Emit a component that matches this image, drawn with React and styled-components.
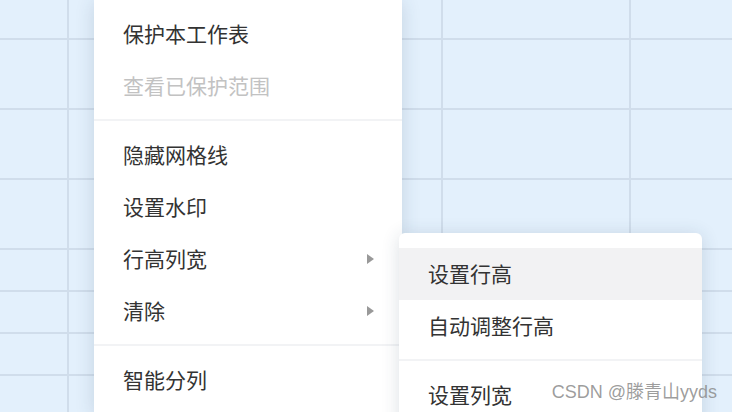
import React from "react"
import styled, { createGlobalStyle } from "styled-components"

const GlobalStyle = createGlobalStyle`
  html, body {
    margin: 0;
    padding: 0;
    width: 732px;
    height: 412px;
    overflow: hidden;
    background: #e3f0fc;
    font-family: "Noto Sans CJK SC", "Noto Sans", sans-serif;
  }
`

const Page = styled.div`
  position: relative;
  width: 732px;
  height: 412px;
  overflow: hidden;
`

const Sheet = styled.div`
  display: grid;
  grid-template-columns: 67px 372px 186px 1fr;
  grid-template-rows: 38px 68px 68px 68px 40px 40px 40px 40px;
  gap: 2px;
  width: 100%;
  height: 100%;
  background: #d0ddeb;
`

const Cell = styled.div`
  background: #e3f0fc;
`

const Menu = styled.div`
  position: absolute;
  left: ${(p) => p.left}px;
  top: ${(p) => p.top}px;
  width: ${(p) => p.width}px;
  padding: ${(p) => p.padTop}px 0 8px;
  background: #fff;
  border-radius: ${(p) => (p.rounded ? "6px" : "0")};
  box-shadow: 0 2px 18px rgba(40, 60, 90, 0.16);
`

const Item = styled.div`
  display: flex;
  align-items: center;
  justify-content: space-between;
  box-sizing: border-box;
  height: 52px;
  padding: 0 28px 3px 29px;
  font-size: 21px;
  color: ${(p) => (p.disabled ? "#c2c2c2" : "#333")};
  background: ${(p) => (p.active ? "#f2f2f3" : "transparent")};
  white-space: nowrap;
`

const Arrow = styled.span`
  width: 0;
  height: 0;
  margin-top: 3px;
  border-top: 5px solid transparent;
  border-bottom: 5px solid transparent;
  border-left: 7px solid #999;
`

const Divider = styled.div`
  height: 2px;
  margin: 7px 0 8px;
  background: #f2f3f5;
`

const Watermark = styled.div`
  position: absolute;
  right: 15px;
  bottom: 9px;
  font-family: "Liberation Sans", "Noto Sans CJK SC", sans-serif;
  font-size: 18px;
  color: rgba(140, 140, 140, 0.85);
  white-space: nowrap;
`

const mainItems = [
  { label: "保护本工作表" },
  { label: "查看已保护范围", disabled: true },
  { divider: true },
  { label: "隐藏网格线" },
  { label: "设置水印" },
  { label: "行高列宽", sub: true },
  { label: "清除", sub: true },
  { divider: true },
  { label: "智能分列" },
]

const subItems = [
  { label: "设置行高", active: true },
  { label: "自动调整行高" },
  { divider: true },
  { label: "设置列宽" },
]

const renderItems = (items) =>
  items.map((it, i) =>
    it.divider ? (
      <Divider key={i} />
    ) : (
      <Item key={i} disabled={it.disabled} active={it.active}>
        <span>{it.label}</span>
        {it.sub && <Arrow />}
      </Item>
    )
  )

const App = () => {
  return (
    <Page>
      <GlobalStyle />
      <Sheet>
        {Array.from({ length: 32 }).map((_, i) => (
          <Cell key={i} />
        ))}
      </Sheet>
      <Menu left={94} top={0} width={308} padTop={8}>
        {renderItems(mainItems)}
      </Menu>
      <Menu left={399} top={233} width={303} padTop={15} rounded>
        {renderItems(subItems)}
      </Menu>
      <Watermark>CSDN @滕青山yyds</Watermark>
    </Page>
  )
}

export default App
